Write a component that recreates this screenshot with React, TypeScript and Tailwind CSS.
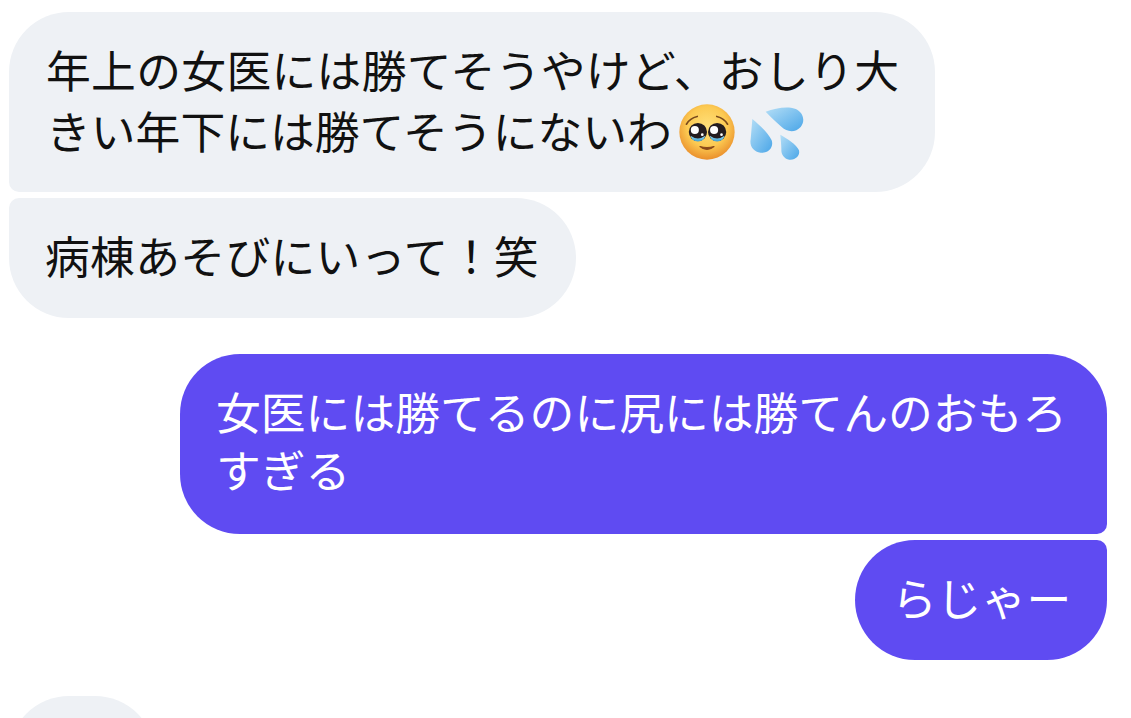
function Pleading() {
  return (
    <svg width="56" height="56" viewBox="118 126 166 166" className="block ml-[7px] mt-[5px] shrink-0">
      <defs>
        <radialGradient id="face" cx="50%" cy="40%" r="60%">
          <stop offset="0%" stopColor="#ffe07a" />
          <stop offset="60%" stopColor="#fcca52" />
          <stop offset="100%" stopColor="#ea8f2c" />
        </radialGradient>
        <linearGradient id="tear" x1="0" y1="0" x2="0" y2="1">
          <stop offset="0%" stopColor="#9adcf0" />
          <stop offset="100%" stopColor="#3c9fd6" />
        </linearGradient>
      </defs>
      <circle cx="201" cy="209" r="82" fill="url(#face)" />
      <path d="M140 186 Q150 168 172 163" fill="none" stroke="#7a4a1c" strokeWidth="5" strokeLinecap="round" />
      <path d="M262 186 Q252 168 230 163" fill="none" stroke="#7a4a1c" strokeWidth="5" strokeLinecap="round" />
      <ellipse cx="174" cy="209" rx="27" ry="27" fill="#241d20" />
      <ellipse cx="231" cy="209" rx="27" ry="27" fill="#241d20" />
      <path d="M152 220 Q174 236 196 220 Q192 236 174 237 Q156 236 152 220Z" fill="url(#tear)" />
      <path d="M209 220 Q231 236 253 220 Q249 236 231 237 Q213 236 209 220Z" fill="url(#tear)" />
      <circle cx="165" cy="203" r="12" fill="#ffffff" />
      <circle cx="222" cy="203" r="12" fill="#ffffff" />
      <circle cx="187" cy="217" r="4" fill="#ffffff" />
      <circle cx="244" cy="217" r="4" fill="#ffffff" />
      <path d="M180 252 Q201 270 222 252 Q201 258 180 252Z" fill="#8b4a1a" stroke="#8b4a1a" strokeWidth="3" strokeLinejoin="round" />
    </svg>
  );
}

function Drops() {
  return (
    <svg width="55" height="55" viewBox="330 135 165 165" className="block ml-[15px] mt-[8px] shrink-0">
      <defs>
        <linearGradient id="drop" x1="0" y1="0" x2="1" y2="1">
          <stop offset="0%" stopColor="#b4def6" />
          <stop offset="100%" stopColor="#4aa6e8" />
        </linearGradient>
      </defs>
      <path d="M377 152 C405 142 440 135 465 143 C490 152 497 180 482 198 C466 216 440 213 425 198 C410 184 392 168 377 152Z" fill="url(#drop)" />
      <path d="M337 174 C356 190 385 215 395 238 C402 258 385 277 362 275 C340 273 328 255 332 235 C334 215 335 195 337 174Z" fill="url(#drop)" />
      <path d="M421 221 C440 232 470 250 477 268 C481 285 465 298 448 296 C432 294 423 280 424 265 C424 250 422 236 421 221Z" fill="url(#drop)" />
    </svg>
  );
}

export default function App() {
  return (
    <div
      className="w-[1131px] h-[718px] overflow-hidden bg-white flex flex-col pt-3 pl-[9px] pr-6 text-[44.8px] leading-[58px]"
      style={{ fontFamily: '"Noto Sans CJK JP", "Noto Sans", sans-serif' }}
    >
      <div className="w-[926px] h-[180px] shrink-0 bg-[#eef1f5] text-[#111111] rounded-[60px] rounded-bl-[10px] pl-[37px] pt-[28px] whitespace-nowrap">
        <div className="tracking-[0.3px]">年上の女医には勝てそうやけど、おしり大</div>
        <div className="flex items-center">
          <span>きい年下には勝てそうにないわ</span>
          <Pleading />
          <Drops />
        </div>
      </div>
      <div className="mt-[6px] w-[567px] h-[120px] shrink-0 bg-[#eef1f5] text-[#111111] rounded-[60px] rounded-tl-[10px] pl-[36px] pt-[28px] whitespace-nowrap tracking-[0.3px]">
        病棟あそびにいって！笑
      </div>
      <div className="mt-[36px] self-end w-[927px] h-[180px] shrink-0 bg-[#5f4bf2] text-white rounded-[60px] rounded-br-[10px] pl-[36px] pt-[28px] whitespace-nowrap">
        <div>女医には勝てるのに尻には勝てんのおもろ</div>
        <div>すぎる</div>
      </div>
      <div className="mt-[6px] self-end w-[252px] h-[120px] shrink-0 bg-[#5f4bf2] text-white rounded-[60px] rounded-tr-[10px] pl-[37px] pt-[28px] whitespace-nowrap">
        らじゃー
      </div>
      <div className="mt-[36px] w-[146px] h-[120px] shrink-0 bg-[#eef1f5] rounded-[60px]" />
    </div>
  );
}
